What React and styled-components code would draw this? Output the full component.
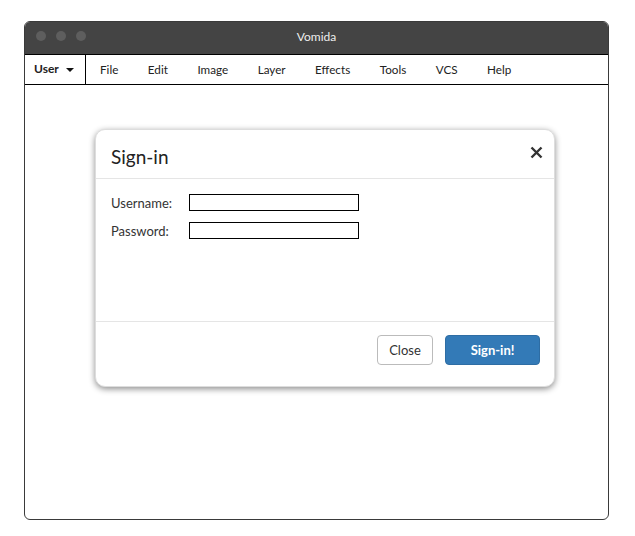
import React from "react";
import styled, { createGlobalStyle } from "styled-components";

const Global = createGlobalStyle`
  html, body { margin: 0; padding: 0; background: #fff; }
  body { font-family: "Lato", "Open Sans", sans-serif; }
  * { box-sizing: border-box; }
`;

const Page = styled.div`
  width: 635px;
  height: 536px;
  padding: 21px 26px 0 24px;
`;

const Window = styled.div`
  width: 585px;
  height: 499px;
  border: 1px solid #3a3a3a;
  border-radius: 6px;
  overflow: hidden;
  display: flex;
  flex-direction: column;
  background: #fff;
`;

const TitleBar = styled.div`
  height: 32px;
  background: #444;
  display: flex;
  align-items: center;
  position: relative;
  padding: 0 0 4px 11px;
  gap: 10px;
`;

const Dot = styled.span`
  width: 10px;
  height: 10px;
  border-radius: 50%;
  background: #5e5e5e;
`;

const Title = styled.div`
  position: absolute;
  left: 0;
  right: 0;
  top: 7px;
  text-align: center;
  color: #eee;
  font-size: 12px;
`;

const MenuBar = styled.div`
  height: 31px;
  border-top: 1px solid #000;
  border-bottom: 1px solid #000;
  display: flex;
  align-items: stretch;
  font-size: 11.7px;
  color: #222;
`;

const UserMenu = styled.div`
  width: 61px;
  border-right: 1px solid #000;
  display: flex;
  align-items: center;
  padding: 0 0 2px 9px;
  font-weight: 700;
  font-size: 12px;
  gap: 7px;
`;

const Caret = styled.span`
  width: 0;
  height: 0;
  border-left: 4.5px solid transparent;
  border-right: 4.5px solid transparent;
  border-top: 4px solid #111;
  margin-top: 3px;
`;

const MenuItem = styled.div`
  display: flex;
  align-items: center;
  padding: 0 15.5px 2px 14px;
`;

const Content = styled.div`
  flex: 1;
  padding: 44px 0 0 70px;
`;

const Dialog = styled.div`
  width: 460px;
  height: 258px;
  border-radius: 10px;
  background: #fff;
  box-shadow: 0 2px 6px rgba(0, 0, 0, 0.45);
  border: 1px solid #ddd;
  display: flex;
  flex-direction: column;
`;

const Header = styled.div`
  height: 49px;
  border-bottom: 1px solid #e5e5e5;
  display: flex;
  align-items: center;
  justify-content: space-between;
  padding: 4px 8px 0 15px;
`;

const HeaderTitle = styled.h4`
  margin: 0;
  font-size: 19px;
  font-weight: 400;
  color: #222;
`;

const CloseX = styled.button`
  border: none;
  background: none;
  padding: 0;
  width: 20px;
  height: 20px;
  display: flex;
  align-items: center;
  justify-content: center;
  margin-top: -8px;
  cursor: pointer;
`;

const Body = styled.div`
  flex: 1;
  padding: 15px 15px 0 15px;
  display: flex;
  flex-direction: column;
  gap: 11px;
`;

const Row = styled.div`
  display: flex;
  align-items: center;
  height: 17px;
`;

const Label = styled.label`
  width: 78px;
  font-size: 13px;
  color: #333;
`;

const Input = styled.input`
  width: 170px;
  height: 17px;
  border: 1px solid #000;
  padding: 0 2px;
  margin: 0;
  font-size: 12px;
  outline: none;
`;

const Footer = styled.div`
  height: 65px;
  border-top: 1px solid #e5e5e5;
  display: flex;
  justify-content: flex-end;
  align-items: flex-start;
  padding: 13px 14px 0 0;
  gap: 12px;
`;

const Button = styled.button`
  height: 30px;
  width: ${(p) => p.$w}px;
  border-radius: 4px;
  font-family: "Lato", "Open Sans", sans-serif;
  font-size: 13px;
  border: 1px solid ${(p) => (p.$primary ? "#2e6da4" : "#bbb")};
  background: ${(p) => (p.$primary ? "#337ab7" : "#fff")};
  color: ${(p) => (p.$primary ? "#fff" : "#333")};
  font-weight: ${(p) => (p.$primary ? 700 : 400)};
  padding: 0;
  cursor: pointer;
`;

const menu = ["File", "Edit", "Image", "Layer", "Effects", "Tools", "VCS", "Help"];

export default function App() {
  return (
    <>
      <Global />
      <Page>
        <Window>
          <TitleBar>
            <Dot />
            <Dot />
            <Dot />
            <Title>Vomida</Title>
          </TitleBar>
          <MenuBar>
            <UserMenu>
              User <Caret />
            </UserMenu>
            {menu.map((m) => (
              <MenuItem key={m}>{m}</MenuItem>
            ))}
          </MenuBar>
          <Content>
            <Dialog>
              <Header>
                <HeaderTitle>Sign-in</HeaderTitle>
                <CloseX aria-label="close">
                  <svg width="13" height="13" viewBox="0 0 13 13">
                    <path d="M1.5 1.5 L11.5 11.5 M11.5 1.5 L1.5 11.5" stroke="#333" strokeWidth="2.4" strokeLinecap="butt" />
                  </svg>
                </CloseX>
              </Header>
              <Body>
                <Row>
                  <Label>Username:</Label>
                  <Input type="text" />
                </Row>
                <Row>
                  <Label>Password:</Label>
                  <Input type="password" />
                </Row>
              </Body>
              <Footer>
                <Button $w={56}>Close</Button>
                <Button $w={95} $primary>Sign-in!</Button>
              </Footer>
            </Dialog>
          </Content>
        </Window>
      </Page>
    </>
  );
}
